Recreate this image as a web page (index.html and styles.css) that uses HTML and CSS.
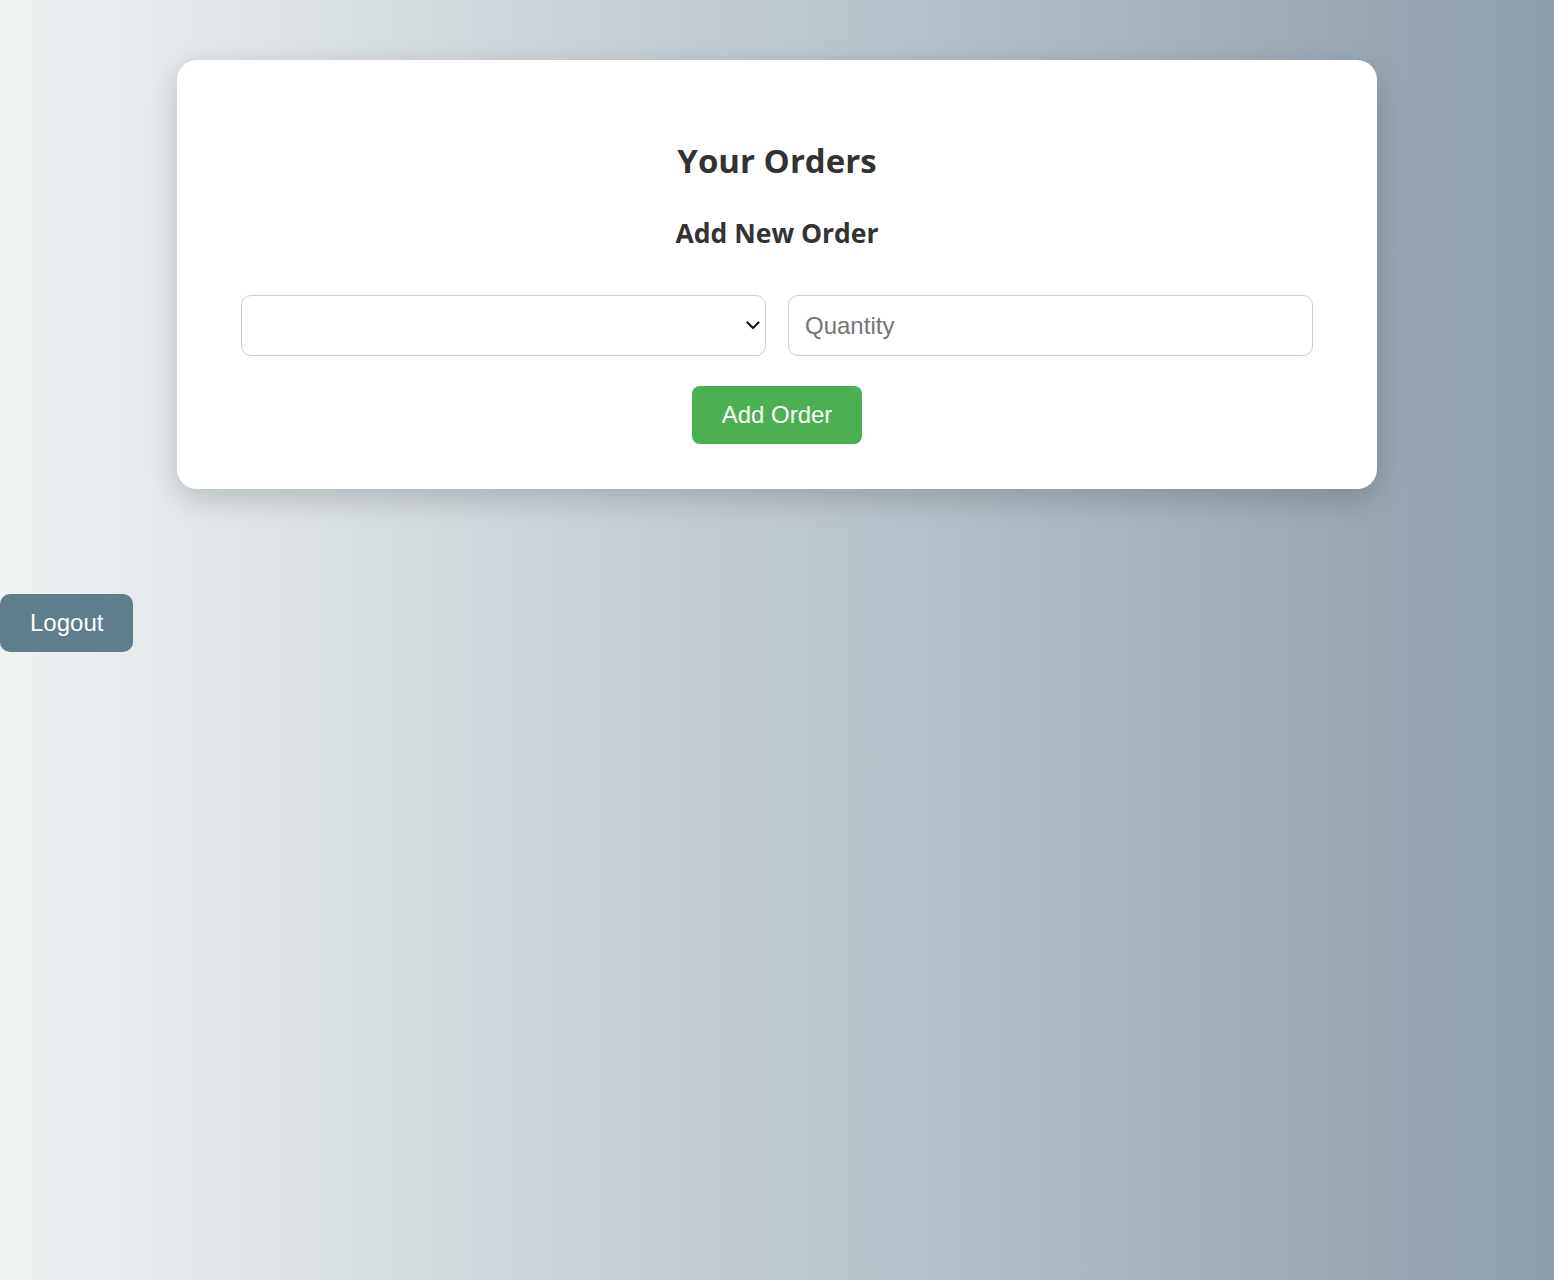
FILE: index.html
```html
<!DOCTYPE html>
<html lang="en">
<head>
<meta charset="utf-8">
<title>Your Orders</title>
<link rel="stylesheet" href="styles.css">
</head>
<body>
<main class="page">
  <section class="card">
    <h1 class="title">Your Orders</h1>
    <h2 class="subtitle">Add New Order</h2>
    <form class="order-form">
      <div class="fields">
        <div class="select-wrap">
          <select class="field field-select"></select>
          <svg class="chevron" width="14" height="9" viewBox="0 0 14 9" aria-hidden="true">
            <path d="M1.5 1.5 L7 7 L12.5 1.5" fill="none" stroke="#1a1a1a" stroke-width="2.2" stroke-linecap="round" stroke-linejoin="round"/>
          </svg>
        </div>
        <input class="field" type="number" placeholder="Quantity">
      </div>
      <button type="button" class="btn btn-add">Add Order</button>
    </form>
  </section>
  <button type="button" class="btn btn-logout">Logout</button>
</main>
</body>
</html>
```
FILE: styles.css
```css
html, body {
  margin: 0;
  padding: 0;
  min-height: 100%;
}
body {
  background: linear-gradient(to right, #eef2f3, #8e9eab);
  min-height: 1280px;
  font-family: "Liberation Sans", Arial, sans-serif;
}
.page {
  padding-top: 60px;
}
.card {
  box-sizing: border-box;
  width: 1200px;
  margin: 0 auto;
  background: #fff;
  border-radius: 20px;
  box-shadow: 0 10px 30px rgba(0, 0, 0, 0.18);
  padding: 80px 64px 45px;
  text-align: center;
}
.title {
  margin: 0;
  font-family: "Open Sans", "Noto Sans", sans-serif;
  font-weight: 700;
  font-size: 33px;
  line-height: 42px;
  color: #333;
}
.subtitle {
  margin: 35px 0 0;
  font-family: "Open Sans", "Noto Sans", sans-serif;
  font-weight: 700;
  font-size: 26.5px;
  line-height: 32px;
  color: #333;
}
.order-form {
  margin-top: 46px;
}
.fields {
  display: grid;
  grid-template-columns: 1fr 1fr;
  gap: 22px;
}
.select-wrap {
  position: relative;
}
.chevron {
  position: absolute;
  right: 6px;
  top: 26px;
  pointer-events: none;
}
.field {
  box-sizing: border-box;
  display: block;
  height: 61px;
  padding: 0 16px;
  font-family: "Liberation Sans", Arial, sans-serif;
  font-size: 24px;
  border: 1px solid #ccc;
  border-radius: 10px;
  background: #fff;
  color: #333;
  width: 100%;
  outline: none;
}
.field-select {
  appearance: none;
  -webkit-appearance: none;
}
.field::placeholder {
  color: #757575;
}
.btn {
  font-family: "Liberation Sans", Arial, sans-serif;
  font-size: 24px;
  line-height: 28px;
  color: #fff;
  border: none;
  border-radius: 8px;
  padding: 15px 30px;
  cursor: pointer;
}
.btn-add {
  margin-top: 30px;
  background: #4caf50;
}
.btn-logout {
  display: block;
  margin-top: 105px;
  background: #607d8b;
  border-radius: 10px;
}
```
